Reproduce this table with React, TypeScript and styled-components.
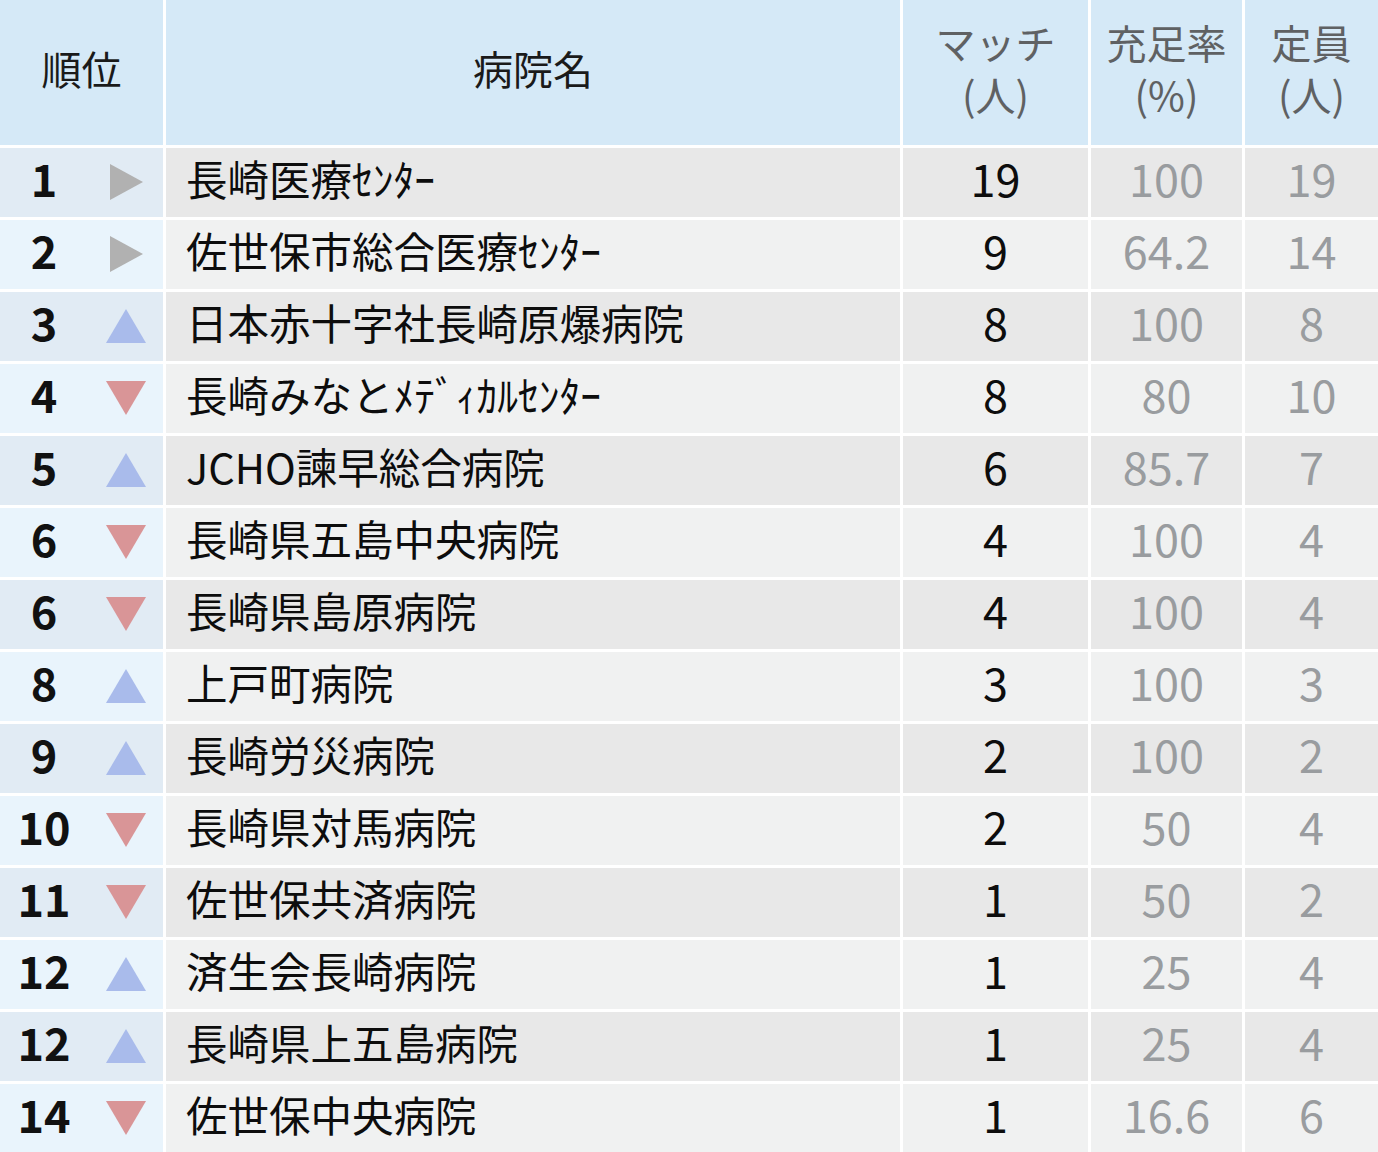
import React from 'react';
import styled, { createGlobalStyle } from 'styled-components';

type Trend = 'same' | 'up' | 'down';

interface IRow {
  rank: number;
  trend: Trend;
  name: string;
  match: number;
  rate: string;
  capacity: number;
}

const rows: IRow[] = [
  { rank: 1, trend: 'same', name: '長崎医療ｾﾝﾀｰ', match: 19, rate: '100', capacity: 19 },
  { rank: 2, trend: 'same', name: '佐世保市総合医療ｾﾝﾀｰ', match: 9, rate: '64.2', capacity: 14 },
  { rank: 3, trend: 'up', name: '日本赤十字社長崎原爆病院', match: 8, rate: '100', capacity: 8 },
  { rank: 4, trend: 'down', name: '長崎みなとﾒﾃﾞｨｶﾙｾﾝﾀｰ', match: 8, rate: '80', capacity: 10 },
  { rank: 5, trend: 'up', name: 'JCHO諫早総合病院', match: 6, rate: '85.7', capacity: 7 },
  { rank: 6, trend: 'down', name: '長崎県五島中央病院', match: 4, rate: '100', capacity: 4 },
  { rank: 6, trend: 'down', name: '長崎県島原病院', match: 4, rate: '100', capacity: 4 },
  { rank: 8, trend: 'up', name: '上戸町病院', match: 3, rate: '100', capacity: 3 },
  { rank: 9, trend: 'up', name: '長崎労災病院', match: 2, rate: '100', capacity: 2 },
  { rank: 10, trend: 'down', name: '長崎県対馬病院', match: 2, rate: '50', capacity: 4 },
  { rank: 11, trend: 'down', name: '佐世保共済病院', match: 1, rate: '50', capacity: 2 },
  { rank: 12, trend: 'up', name: '済生会長崎病院', match: 1, rate: '25', capacity: 4 },
  { rank: 12, trend: 'up', name: '長崎県上五島病院', match: 1, rate: '25', capacity: 4 },
  { rank: 14, trend: 'down', name: '佐世保中央病院', match: 1, rate: '16.6', capacity: 6 },
];

const GlobalStyle = createGlobalStyle`
  html, body {
    margin: 0;
    padding: 0;
    background: #ffffff;
  }
  body {
    font-family: 'Noto Sans CJK JP', 'Noto Sans', sans-serif;
  }
`;

const Table = styled.div`
  display: grid;
  grid-template-columns: 163px 734px 185px 151px 133px;
  grid-auto-rows: 69px;
  grid-template-rows: 145px;
  column-gap: 3px;
  row-gap: 3px;
  width: 1378px;
  height: 1152px;
  overflow: hidden;
  background: #ffffff;
`;

const HeadCell = styled.div<{ $muted?: boolean }>`
  display: flex;
  flex-direction: column;
  align-items: center;
  justify-content: center;
  background: #d5e9f7;
  color: ${(p) => (p.$muted ? '#5f6163' : '#1a1a1a')};
  font-size: 40px;
  padding-bottom: 9px;
  box-sizing: border-box;
`;

const HeadLine = styled.span`
  display: block;
  line-height: 52px;
  height: 52px;
`;

const RankCell = styled.div<{ $odd: boolean }>`
  display: flex;
  align-items: center;
  background: ${(p) => (p.$odd ? '#e1ebf4' : '#e9f4fc')};
`;

const RankNumber = styled.div`
  width: 88px;
  text-align: center;
  font-size: 45px;
  font-weight: 700;
  color: #111111;
  line-height: 1.3;
  padding-bottom: 8px;
`;

const TrendBox = styled.div`
  width: 75px;
  display: flex;
  justify-content: center;
  align-items: center;
  padding-bottom: 2px;
`;

const Cell = styled.div<{ $odd: boolean; $align?: 'left' | 'center'; $muted?: boolean }>`
  display: flex;
  align-items: center;
  justify-content: ${(p) => (p.$align === 'left' ? 'flex-start' : 'center')};
  padding-left: ${(p) => (p.$align === 'left' ? '20px' : '0')};
  background: ${(p) => (p.$odd ? '#e8e8e8' : '#f0f1f1')};
  color: ${(p) => (p.$muted ? '#999c9f' : '#0d0d0d')};
  white-space: nowrap;
`;

const Name = styled.span`
  font-size: 41.5px;
  line-height: 1.3;
  padding-bottom: 7px;
`;

const Num = styled.span`
  font-size: 45px;
  line-height: 1.3;
  padding-bottom: 8px;
`;

const TrendIcon: React.FC<{ trend: Trend }> = ({ trend }) => {
  if (trend === 'same') {
    return (
      <svg width="36" height="38" viewBox="0 0 36 38">
        <polygon points="2,1 35,19 2,37" fill="#b1b1b1" />
      </svg>
    );
  }
  if (trend === 'up') {
    return (
      <svg width="42" height="36" viewBox="0 0 42 36">
        <polygon points="21,1 41,35 1,35" fill="#a9bbeb" />
      </svg>
    );
  }
  return (
    <svg width="42" height="36" viewBox="0 0 42 36">
      <polygon points="1,1 41,1 21,35" fill="#d99597" />
    </svg>
  );
};

export default function App() {
  return (
    <>
      <GlobalStyle />
      <Table>
        <HeadCell>
          <HeadLine>順位</HeadLine>
        </HeadCell>
        <HeadCell>
          <HeadLine>病院名</HeadLine>
        </HeadCell>
        <HeadCell $muted>
          <HeadLine>マッチ</HeadLine>
          <HeadLine>(人)</HeadLine>
        </HeadCell>
        <HeadCell $muted>
          <HeadLine>充足率</HeadLine>
          <HeadLine>(%)</HeadLine>
        </HeadCell>
        <HeadCell $muted>
          <HeadLine>定員</HeadLine>
          <HeadLine>(人)</HeadLine>
        </HeadCell>
        {rows.map((r, i) => {
          const odd = i % 2 === 0;
          return (
            <React.Fragment key={i}>
              <RankCell $odd={odd}>
                <RankNumber>{r.rank}</RankNumber>
                <TrendBox>
                  <TrendIcon trend={r.trend} />
                </TrendBox>
              </RankCell>
              <Cell $odd={odd} $align="left">
                <Name>{r.name}</Name>
              </Cell>
              <Cell $odd={odd}>
                <Num>{r.match}</Num>
              </Cell>
              <Cell $odd={odd} $muted>
                <Num>{r.rate}</Num>
              </Cell>
              <Cell $odd={odd} $muted>
                <Num>{r.capacity}</Num>
              </Cell>
            </React.Fragment>
          );
        })}
      </Table>
    </>
  );
}
